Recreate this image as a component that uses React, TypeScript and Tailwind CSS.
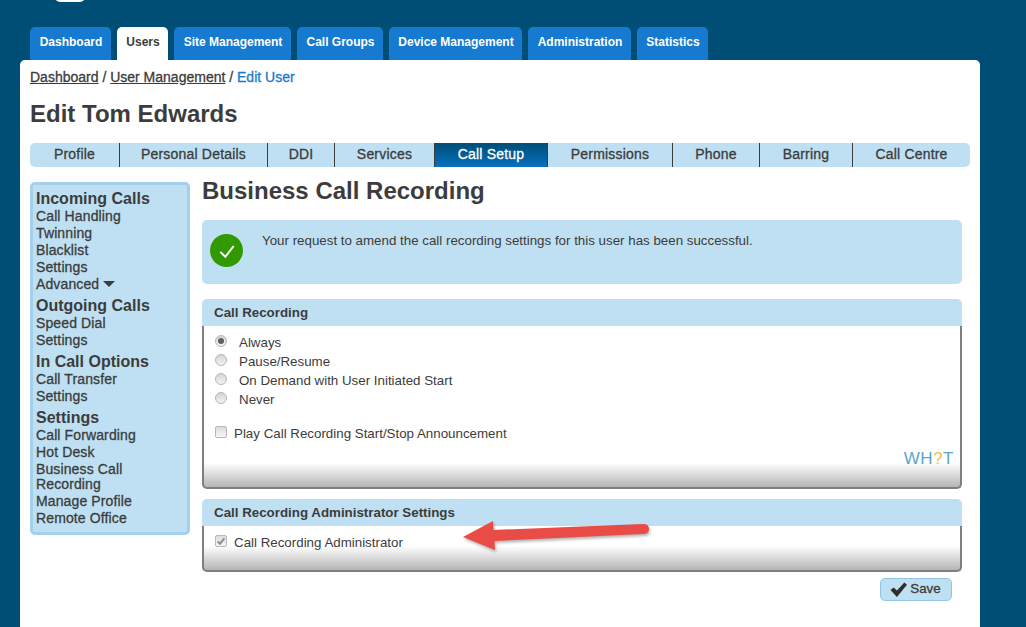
const font = 'font-["Liberation_Sans",Arial,sans-serif]';
const heavy = '[-webkit-text-stroke:0.3px]';

const mainTabs = [
  { label: 'Dashboard', w: 'w-[81px]' },
  { label: 'Users', w: 'w-[51px]', active: true },
  { label: 'Site Management', w: 'w-[117px]' },
  { label: 'Call Groups', w: 'w-[86px]' },
  { label: 'Device Management', w: 'w-[133px]' },
  { label: 'Administration', w: 'w-[103px]' },
  { label: 'Statistics', w: 'w-[71px]' },
];

const subTabs = [
  { label: 'Profile', w: 'w-[90px]' },
  { label: 'Personal Details', w: 'w-[148px]' },
  { label: 'DDI', w: 'w-[67px]' },
  { label: 'Services', w: 'w-[100px]' },
  { label: 'Call Setup', w: 'w-[113px]', active: true },
  { label: 'Permissions', w: 'w-[125px]' },
  { label: 'Phone', w: 'w-[87px]' },
  { label: 'Barring', w: 'w-[93px]' },
  { label: 'Call Centre', w: 'w-[117px]' },
];

const sideMenu = [
  { title: 'Incoming Calls', items: ['Call Handling', 'Twinning', 'Blacklist', 'Settings', 'Advanced'] },
  { title: 'Outgoing Calls', items: ['Speed Dial', 'Settings'] },
  { title: 'In Call Options', items: ['Call Transfer', 'Settings'] },
  { title: 'Settings', items: ['Call Forwarding', 'Hot Desk', 'Business Call Recording', 'Manage Profile', 'Remote Office'] },
];

const radios = ['Always', 'Pause/Resume', 'On Demand with User Initiated Start', 'Never'];

const Radio = ({ checked }: { checked?: boolean }) => (
  <span className="flex h-[12px] w-[12px] items-center justify-center rounded-full border border-[#b5b5b5] bg-gradient-to-b from-[#d4d4d4] to-[#f4f4f4]">
    {checked && <span className="h-[6px] w-[6px] rounded-full bg-[#5f5f5f]" />}
  </span>
);

const Checkbox = ({ checked }: { checked?: boolean }) => (
  <span className="flex h-[12px] w-[12px] items-center justify-center rounded-[2px] border border-[#b8b8b8] bg-gradient-to-b from-[#dcdcdc] to-[#f6f6f6]">
    {checked && (
      <svg viewBox="0 0 12 12" className="h-[10px] w-[10px]">
        <path d="M2 6.5 L4.8 9.2 L10 2.8" fill="none" stroke="#8f8f8f" strokeWidth="2.4" />
      </svg>
    )}
  </span>
);

const Panel = ({ title, bodyClass, children }: { title: string; bodyClass: string; children: React.ReactNode }) => (
  <section>
    <h3 className="flex h-[27px] items-center rounded-t-[5px] bg-[#bfe0f2] pl-[12px] text-[13.33px] font-bold text-[#3c3c3c]">
      {title}
    </h3>
    <div className={`relative rounded-b-[5px] border-2 border-t-0 border-[#7f7f7f] bg-[linear-gradient(to_top,#b5b5b5,#ffffff_24px)] ${bodyClass}`}>
      {children}
    </div>
  </section>
);

export default function App() {
  return (
    <div className={`relative h-[627px] w-[1026px] overflow-hidden bg-[#004e75] ${font} text-[#3c3c3c]`}>
      {/* bit of the logo cut off by the top edge */}
      <div className="absolute left-[55px] top-[-8px] h-[10px] w-[30px] rounded-full bg-white" />

      <nav className="flex gap-[6px] pl-[30px] pt-[27px]">
        {mainTabs.map((tab) => (
          <a
            key={tab.label}
            className={`flex h-[33px] ${tab.w} items-center justify-center rounded-t-[5px] pb-[3px] pl-[1px] text-[12px] font-bold ${
              tab.active ? 'bg-white text-[#3c3c3c]' : 'bg-[#167ad0] text-white'
            }`}
          >
            {tab.label}
          </a>
        ))}
      </nav>

      <main className="ml-[20px] h-[600px] w-[960px] rounded-t-[5px] bg-white px-[10px]">
        <div className={`pt-[9px] text-[14px] leading-[17px] ${heavy}`}>
          <a className="underline">Dashboard</a> / <a className="underline">User Management</a> /{' '}
          <span className="text-[#167ad0]">Edit User</span>
        </div>
        <h1 className="mt-[14px] text-[24px] font-bold leading-[28px]">Edit Tom Edwards</h1>

        <div className="mt-[15px] flex h-[24px] w-[940px] overflow-hidden rounded-[5px] bg-[#bfe0f2]">
          {subTabs.map((tab, i) => (
            <a
              key={tab.label}
              className={`flex h-full ${tab.w} items-center justify-center pb-[1px] text-[14px] tracking-[0.2px] ${heavy} ${
                i < subTabs.length - 1 ? 'border-r border-[#3c3c3c]' : ''
              } ${tab.active ? 'bg-gradient-to-b from-[#004e75] to-[#0a70c0] text-white' : ''}`}
            >
              {tab.label}
            </a>
          ))}
        </div>

        <div className="mt-[15px] flex items-start gap-[12px]">
          <aside className="h-[353px] w-[160px] shrink-0 rounded-[5px] border-[3px] border-[#a3d0ec] bg-[#bfe0f2] px-[3px] pt-[4px]">
            {sideMenu.map((group) => (
              <div key={group.title} className="mb-[3px]">
                <h4 className="text-[16px] font-bold leading-[19px]">{group.title}</h4>
                {group.items.map((item) => (
                  <div key={item} className={`py-[1px] text-[14px] leading-[15px] tracking-[0.12px] ${heavy}`}>
                    {item}
                    {item === 'Advanced' && (
                      <span className="ml-[4px] inline-block h-0 w-0 border-x-[6px] border-t-[6px] border-x-transparent border-t-[#3c3c3c] align-[2px]" />
                    )}
                  </div>
                ))}
              </div>
            ))}
          </aside>

          <div className="w-[760px]">
            <h2 className="text-[24px] font-bold leading-[18px]">Business Call Recording</h2>

            <div className="mt-[20px] flex h-[64px] items-start rounded-[5px] bg-[#bfe0f2] pl-[8px] pt-[14px]">
              <span className="flex h-[33px] w-[33px] items-center justify-center rounded-full bg-[#339900]">
                <svg viewBox="0 0 24 24" className="h-[20px] w-[20px]">
                  <path d="M4 13 L10 19 L20 6" fill="none" stroke="white" strokeWidth="2.4" />
                </svg>
              </span>
              <p className="ml-[19px] text-[13.33px] leading-[14px]">
                Your request to amend the call recording settings for this user has been successful.
              </p>
            </div>

            <div className="mt-[15px]">
              <Panel title="Call Recording" bodyClass="h-[163px]">
                <div className="pl-[11px] pt-[6px]">
                  {radios.map((label, i) => (
                    <label key={label} className="flex h-[19px] items-center text-[13.33px]">
                      <span className="-translate-y-[1px]"><Radio checked={i === 0} /></span>
                      <span className="ml-[12px] pt-[2px]">{label}</span>
                    </label>
                  ))}
                  <label className="mt-[15px] flex h-[19px] items-center text-[13.33px]">
                    <span className="-translate-y-[1px]"><Checkbox /></span>
                    <span className="ml-[7px] pt-[2px]">Play Call Recording Start/Stop Announcement</span>
                  </label>
                </div>
                <div className="absolute right-[6px] top-[123px] text-[17px] leading-[20px] tracking-[0.5px] text-[#5ba5cc]">
                  WH<span className="text-[#f5c142]">?</span>T
                </div>
              </Panel>
            </div>

            <div className="mt-[10px]">
              <Panel title="Call Recording Administrator Settings" bodyClass="h-[46px]">
                <label className="flex h-[19px] translate-y-[6px] items-center pl-[11px] text-[13.33px]">
                  <span className="-translate-y-[1px]"><Checkbox checked /></span>
                  <span className="ml-[7px] pt-[2px]">Call Recording Administrator</span>
                </label>
              </Panel>
            </div>

            <div className="mt-[6px] flex justify-end pr-[10px]">
              <button className={`flex h-[23px] w-[72px] items-center justify-center gap-[3px] rounded-[5px] border border-[#8fc6e8] bg-[#bfe0f2] pb-[1px] pr-[1px] text-[13.33px] ${heavy}`}>
                <svg viewBox="0 0 16 14" className="h-[15px] w-[17px]">
                  <path d="M0.500 7.500 L3.500 5 L6.500 8 L13.500 0.500 L16 2.500 L6.500 14 Z" fill="#2f2f2f" />
                </svg>
                Save
              </button>
            </div>
          </div>
        </div>
      </main>

      {/* annotation arrow drawn over the page */}
      <svg className="pointer-events-none absolute left-0 top-0" width="1026" height="627" viewBox="0 0 1026 627">
        <path
          className="blur-[1.5px]"
          d="M463 537 L493 521 L493.500 530 L643 524 Q649 524 649 529 Q649 534 643 534 L494.500 541 L495 550 Z"
          fill="#000"
          opacity="0.3"
          transform="translate(1 2)"
        />
        <path
          d="M463 537 L493 521 L493.500 530 L643 524 Q649 524 649 529 Q649 534 643 534 L494.500 541 L495 550 Z"
          fill="#e94b46"
        />
      </svg>
    </div>
  );
}
